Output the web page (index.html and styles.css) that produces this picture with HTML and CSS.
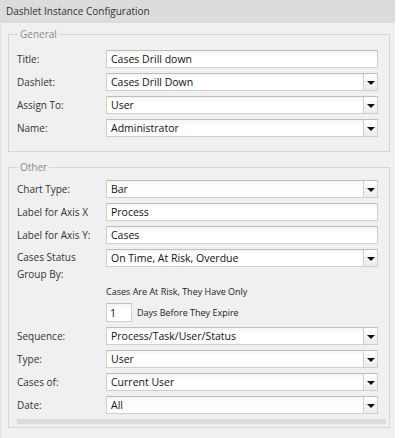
FILE: index.html
```html
<!DOCTYPE html>
<html>
<head>
<meta charset="utf-8">
<link rel="stylesheet" href="styles.css">
</head>
<body>
<div class="panel">
  <div class="header">Dashlet Instance Configuration</div>
  <div class="body">
    <fieldset class="group general">
      <legend>General</legend>
      <div class="row"><label>Title:</label><div class="input">Cases Drill down</div></div>
      <div class="row"><label>Dashlet:</label><div class="select"><span class="val">Cases Drill Down</span><span class="btn"><i class="caret"></i></span></div></div>
      <div class="row"><label>Assign To:</label><div class="select"><span class="val">User</span><span class="btn"><i class="caret"></i></span></div></div>
      <div class="row"><label>Name:</label><div class="select"><span class="val">Administrator</span><span class="btn"><i class="caret"></i></span></div></div>
    </fieldset>
    <fieldset class="group other">
      <legend>Other</legend>
      <div class="row"><label>Chart Type:</label><div class="select"><span class="val">Bar</span><span class="btn"><i class="caret"></i></span></div></div>
      <div class="row"><label>Label for Axis X</label><div class="input">Process</div></div>
      <div class="row"><label>Label for Axis Y:</label><div class="input">Cases</div></div>
      <div class="row tall"><label>Cases Status<br>Group By:</label><div class="select"><span class="val">On Time, At Risk, Overdue</span><span class="btn"><i class="caret"></i></span></div></div>
      <div class="risk">
        <div class="risk-text">Cases Are At Risk, They Have Only</div>
        <div class="risk-line"><div class="input small">1</div><span>Days Before They Expire</span></div>
      </div>
      <div class="row"><label>Sequence:</label><div class="select"><span class="val">Process/Task/User/Status</span><span class="btn"><i class="caret"></i></span></div></div>
      <div class="row"><label>Type:</label><div class="select"><span class="val">User</span><span class="btn"><i class="caret"></i></span></div></div>
      <div class="row"><label>Cases of:</label><div class="select"><span class="val">Current User</span><span class="btn"><i class="caret"></i></span></div></div>
      <div class="row"><label>Date:</label><div class="select"><span class="val">All</span><span class="btn"><i class="caret"></i></span></div></div>
      <div class="bar"></div>
    </fieldset>
  </div>
</div>
</body>
</html>
```
FILE: styles.css
```css
html, body {
  margin: 0;
  padding: 0;
  background: #ffffff;
}
body {
  font-family: "Open Sans", "DejaVu Sans", sans-serif;
  font-size: 10px;
  color: #333333;
}
.panel {
  width: 395px;
  height: 438px;
  display: flex;
  flex-direction: column;
}
.header {
  height: 23px;
  line-height: 23px;
  background: #dcdcdc;
  padding-left: 6px;
  color: #333;
  font-size: 10px;
}
.body {
  flex: 1;
  background: #f0f0f0;
  border-left: 1px solid #e2e2e2;
  padding: 5px 5px 0 7px;
}
.group {
  margin: 0;
  border: 1px solid #d6d6d6;
  padding: 0 11px 0 8px;
}
.group legend {
  color: #8a8a8a;
  padding: 0 2px;
  margin-left: 1px;
  font-size: 10px;
  line-height: 12px;
}
.general {
  padding-top: 10px;
  padding-bottom: 14px;
  margin-bottom: 9px;
}
.other {
  padding-top: 7px;
  padding-bottom: 3px;
}
.row {
  display: flex;
  align-items: center;
  height: 18px;
  margin-bottom: 5px;
}
.row:last-of-type { margin-bottom: 0; }
.row label {
  width: 89px;
  flex: none;
  line-height: 17px;
}
.row.tall {
  align-items: flex-start;
  height: 36px;
  margin-bottom: 0;
}
.input, .select {
  flex: 1;
  height: 18px;
  box-sizing: border-box;
  border: 1px solid #cfcfcf;
  border-top-color: #bdbdbd;
  background: linear-gradient(#f4f4f4, #ffffff 5px);
  color: #111;
  font-size: 10.5px;
  line-height: 16px;
  padding-left: 4px;
}
.select {
  display: flex;
  padding-left: 0;
}
.select .val {
  flex: 1;
  padding-left: 4px;
}
.select .btn {
  width: 13px;
  border-left: 1px solid #cfcfcf;
  background: linear-gradient(#ffffff, #ececec);
  display: flex;
  align-items: center;
  justify-content: center;
}
.caret {
  width: 0;
  height: 0;
  border-left: 4px solid transparent;
  border-right: 4px solid transparent;
  border-top: 4px solid #111;
  margin-top: 1px;
}
.risk {
  padding-left: 89px;
  margin-bottom: 5px;
}
.risk-text {
  font-size: 9px;
  height: 14px;
  line-height: 14px;
  color: #222;
  margin-bottom: 4px;
}
.risk-line {
  display: flex;
  align-items: center;
  font-size: 9px;
  color: #222;
}
.input.small {
  flex: none;
  width: 26px;
  height: 19px;
  line-height: 18px;
  margin-right: 5px;
  padding-left: 3px;
}
.bar {
  height: 5px;
  background: #dcdcdc;
  margin: 5px -8px 0 0;
}
```
